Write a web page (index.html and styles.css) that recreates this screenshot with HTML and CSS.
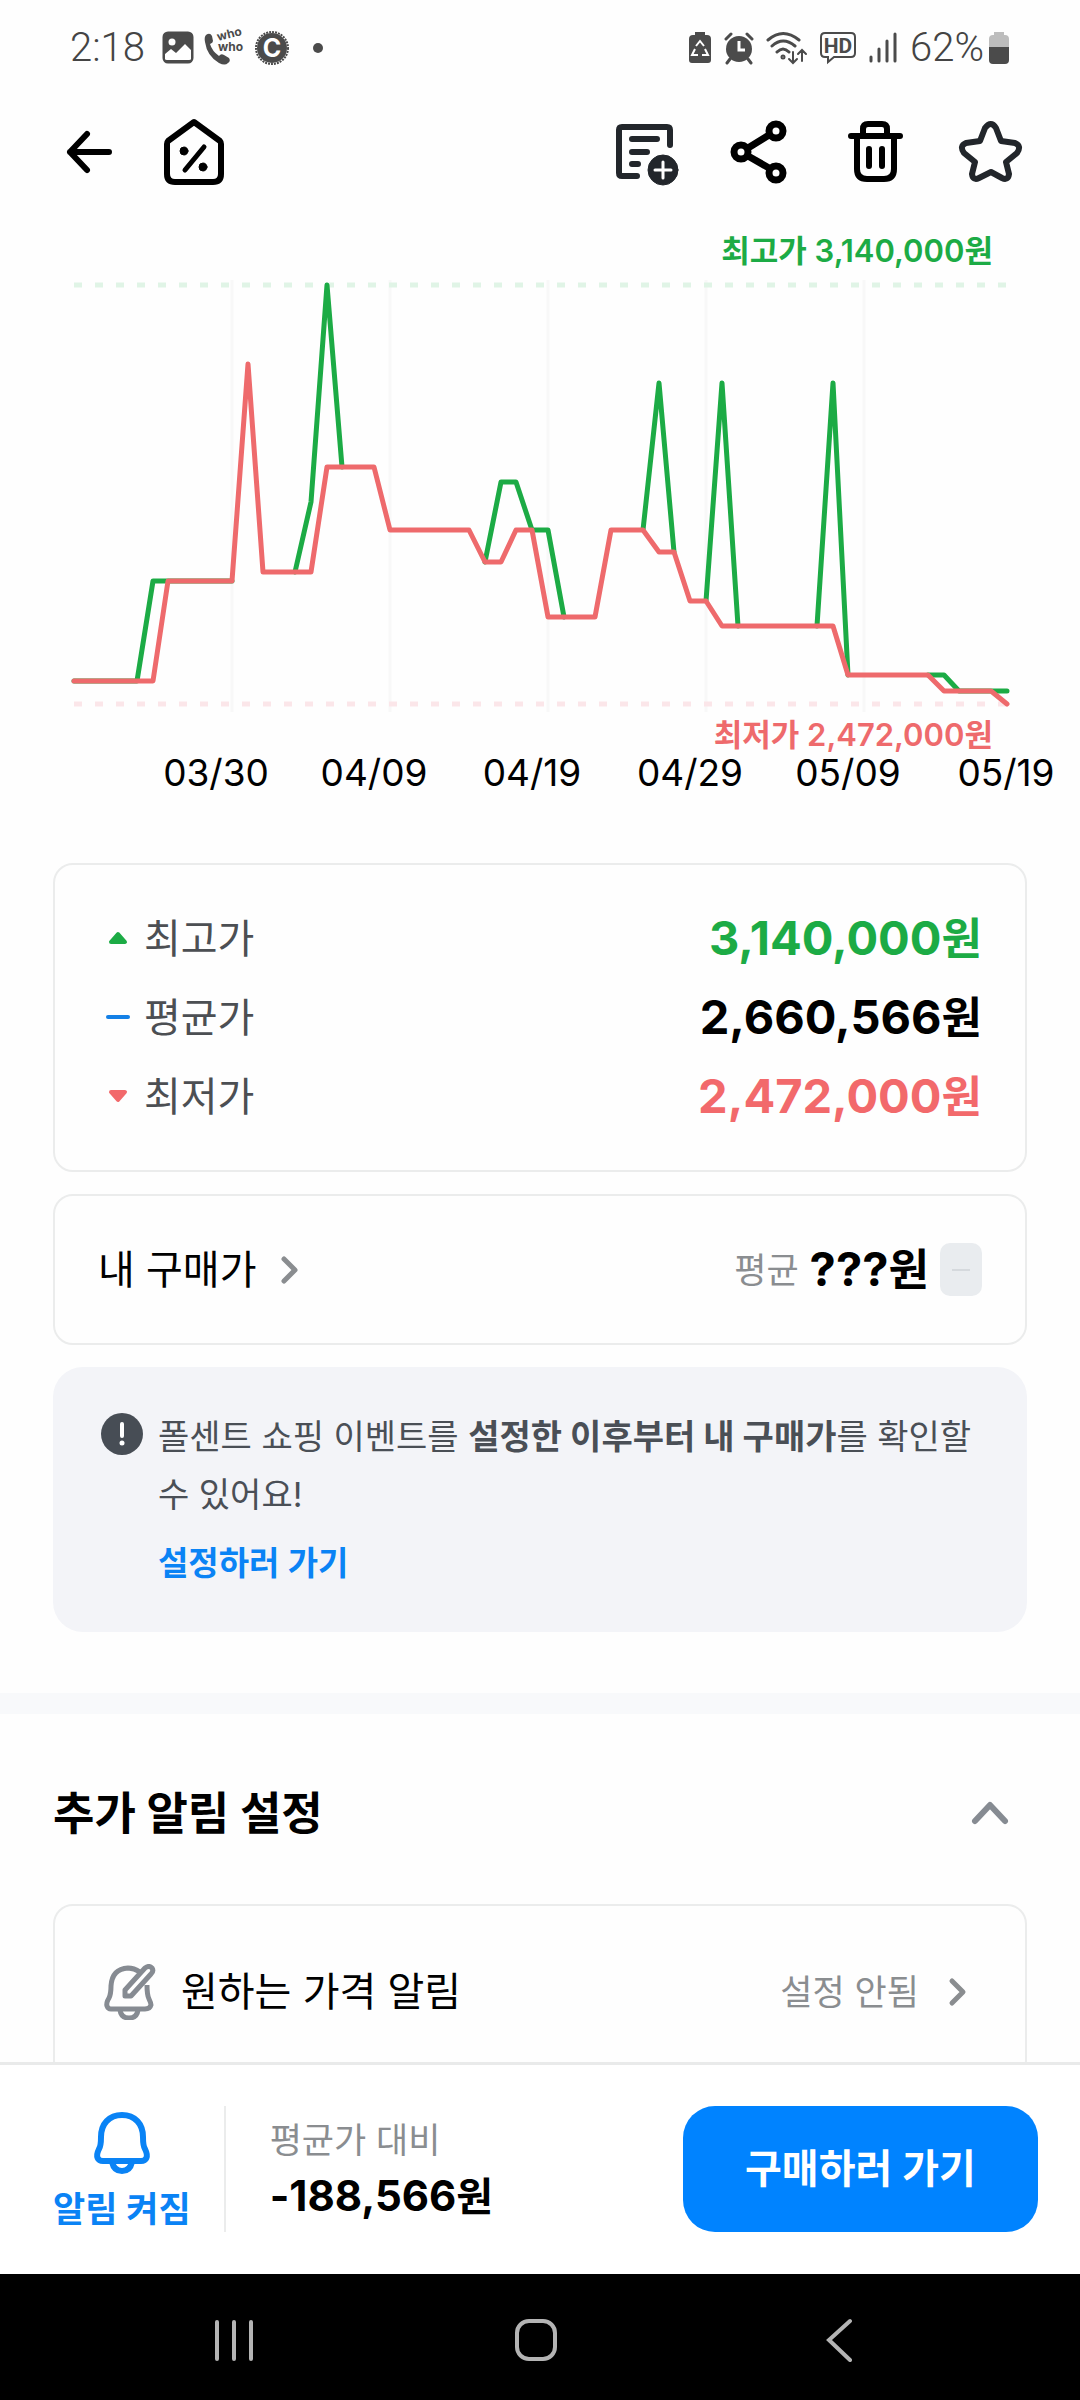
FILE: index.html
```html
<!DOCTYPE html>
<html lang="ko">
<head>
    <meta charset="UTF-8">
    <meta name="viewport" content="width=device-width, initial-scale=1.0">
    <title>가격 변동 그래프</title>
    <link rel="stylesheet" href="styles.css">
</head>
<body>
    <div class="app">
        <div class="status-bar">
            <div class="status-left">
                <span class="clock">2:18</span>
                <svg width="32" height="34" viewBox="0 0 32 34">
                    <rect x="2" y="2" width="28" height="29" rx="4" fill="#4b4b4b" stroke="#4b4b4b" stroke-width="3"/>
                    <circle cx="10" cy="11" r="3.5" fill="#fff"/>
                    <path d="M3 23l6-5 5 4 9-9 6 6v9q0 1-2 1H5q-2 0-2-1z" fill="#fff"/>
                </svg>
                <svg class="call" width="42" height="36" viewBox="0 0 42 36">
                    <path d="M3 5q4-3 6 1l1 5q0 2-3 3 2 7 9 12 2-3 5-1l5 3q2 3-1 5-3 3-9 0Q4 26 2 12 1 7 3 5z" fill="#4b4b4b"/>
                    <text x="15" y="11" class="who" transform="rotate(-14 15 11)">who</text>
                    <text x="15" y="21" class="who">who</text>
                </svg>
                <svg width="36" height="36" viewBox="0 0 36 36">
                    <circle cx="18" cy="18" r="15" fill="#4b4b4b"/>
                    <circle cx="18" cy="18" r="16" fill="none" stroke="#4b4b4b" stroke-width="2" stroke-dasharray="2 1"/>
                    <text x="18" y="27" class="badge-c">C</text>
                </svg>
                <span class="dot"></span>
            </div>
            <div class="status-right">
                <svg width="24" height="34" viewBox="0 0 24 34">
                    <path d="M7 1h10v3h2q4 0 4 4v21q0 3-3 3H4q-3 0-3-3V8q0-4 4-4h2z" fill="#4b4b4b"/>
                    <path d="M8 15l4-5 4 5M17 18l3 6h-6M10 24H4l3-6" fill="none" stroke="#fff" stroke-width="2"/>
                </svg>
                <svg width="30" height="34" viewBox="0 0 30 34">
                    <circle cx="15" cy="18" r="13" fill="#4b4b4b"/>
                    <path d="M2 8l5-5M28 8l-5-5M6 28l-3 4M24 28l3 4" stroke="#4b4b4b" stroke-width="3" stroke-linecap="round"/>
                    <path d="M15 10v9h6" fill="none" stroke="#fff" stroke-width="3"/>
                </svg>
                <svg width="42" height="34" viewBox="0 0 42 34" fill="none" stroke="#4b4b4b" stroke-width="3" stroke-linecap="round">
                    <path d="M2 9q15-13 31 0M6 15q11-10 23 0M11 21q6-6 12 0"/>
                    <circle cx="17" cy="26" r="1"/>
                    <path d="M27 21v10M23 28l4 4 4-4M36 30V20M32 23l4-4 4 4" stroke-width="2"/>
                </svg>
                <svg width="36" height="34" viewBox="0 0 36 34">
                    <path d="M5 2h26q4 0 4 4v16q0 4-4 4H14l-6 5v-5H5q-4 0-4-4V6q0-4 4-4z" fill="none" stroke="#4b4b4b" stroke-width="2"/>
                    <text x="18" y="22" class="hd">HD</text>
                </svg>
                <svg class="signal" width="30" height="34" viewBox="0 0 30 34" stroke="#4b4b4b" stroke-width="3" stroke-linecap="round">
                    <path d="M3 26v4M11 18v12M19 10v20M27 3v27"/>
                </svg>
                <span class="percent">62%</span>
                <svg width="22" height="34" viewBox="0 0 22 34">
                    <path d="M6 1h10v3h1q4 0 4 4v9H1V8q0-4 4-4h1z" fill="#bdbdbd"/>
                    <path d="M1 16h20v13q0 4-4 4H5q-4 0-4-4z" fill="#4b4b4b"/>
                </svg>
            </div>
        </div>

        <header class="header">
            <div class="header-left">
                <button type="button" class="icon-btn" aria-label="뒤로">
                    <svg viewBox="0 0 72 72" stroke-width="6"><path d="M56 36H17M34 18L17 36l17 18"/></svg>
                </button>
                <button type="button" class="icon-btn" aria-label="홈">
                    <svg viewBox="0 0 72 72" stroke-width="6">
                        <path d="M36 6L10 25q-1 1-1 3v30q0 8 8 8h38q8 0 8-8V28q0-2-1-3z"/>
                        <path d="M46 31L27 54" stroke-width="5"/>
                        <circle cx="26" cy="35" r="4" fill="#000" stroke-width="1"/>
                        <circle cx="45" cy="51" r="4" fill="#000" stroke-width="1"/>
                    </svg>
                </button>
            </div>
            <div class="header-right">
                <button type="button" class="icon-btn dark" aria-label="메모 추가">
                    <svg viewBox="0 0 72 72" stroke-width="6">
                        <path d="M60 29V14q0-3-3-3H12q-3 0-3 3v43q0 3 3 3h15"/>
                        <path d="M22 23h25M22 36h15M22 48h6"/>
                        <circle cx="53" cy="54" r="15" fill="#22262b" stroke-width="1"/>
                        <path d="M45 54h16M53 46v16" stroke="#fff" stroke-width="3"/>
                    </svg>
                </button>
                <button type="button" class="icon-btn" aria-label="공유">
                    <svg viewBox="0 0 72 72" stroke-width="7">
                        <circle cx="51" cy="15" r="7"/>
                        <circle cx="16" cy="36" r="7"/>
                        <circle cx="51" cy="57" r="7"/>
                        <path d="M23 32l21-13M23 40l21 12"/>
                    </svg>
                </button>
                <button type="button" class="icon-btn" aria-label="삭제">
                    <svg viewBox="0 0 72 72" stroke-width="6">
                        <path d="M11 20h49M23 18v-5q0-5 5-5h14q5 0 5 5v5M17 20v33q0 10 10 10h17q10 0 10-10V20M29 33v17M42 33v17"/>
                    </svg>
                </button>
                <button type="button" class="icon-btn dark" aria-label="즐겨찾기">
                    <svg viewBox="0 0 72 72" stroke-width="6">
                        <path d="M30 12Q36 4 41 12l5 13 14 2q7 3 2 10l-11 9 3 12q-1 7-7 4l-11-6-12 6q-6 3-7-4l3-12-11-9q-5-7 2-10l14-2z"/>
                    </svg>
                </button>
            </div>
        </header>

        <main class="content">
            <!-- Price history -->
            <svg class="chart" viewBox="0 0 1080 600" role="img" aria-label="가격 그래프">
                <path class="grid" d="M232 66v432M390 66v432M548 66v432M706 66v432M864 66v432"/>
                <path class="limit high" d="M74 71h934"/>
                <path class="limit low" d="M74 490h934"/>
                <polyline class="line high" points="74,467 137,467 153,367 232,367"/>
                <polyline class="line high" points="295,358 311,288 327,71 342,253"/>
                <polyline class="line high" points="485,348 501,268 516,268 532,316 548,316 564,403"/>
                <polyline class="line high" points="643,316 659,169 674,338"/>
                <polyline class="line high" points="706,387 722,169 738,412"/>
                <polyline class="line high" points="817,412 833,169 848,461"/>
                <polyline class="line high" points="928,461 944,461 959,477 1007,477"/>
                <polyline class="line low" points="74,467 153,467 168,367 232,367 248,150 263,358 311,358 327,253 374,253 390,316 469,316 485,348 501,348 516,316 532,316 548,403 595,403 611,316 643,316 659,338 674,338 690,387 706,387 722,412 833,412 848,461 928,461 944,477 991,477 1007,490"/>
                <text class="limit-label high" x="993" y="48">최고가 3,140,000원</text>
                <text class="limit-label low" x="993" y="532">최저가 2,472,000원</text>
                <g class="dates">
                    <text x="216" y="572">03/30</text>
                    <text x="374" y="572">04/09</text>
                    <text x="532" y="572">04/19</text>
                    <text x="690" y="572">04/29</text>
                    <text x="848" y="572">05/09</text>
                    <text x="1006" y="572">05/19</text>
                </g>
            </svg>

            <div class="cards">
                <dl class="card price-list">
                    <div class="price-row high">
                        <dt>
                            <svg width="40" height="40" viewBox="0 0 40 40"><path d="M20 15l7 8H13z" fill="#1cab45" stroke="#1cab45" stroke-width="4" stroke-linejoin="round"/></svg>
                            최고가
                        </dt>
                        <dd>3,140,000<span class="won">원</span></dd>
                    </div>
                    <div class="price-row">
                        <dt>
                            <svg width="40" height="40" viewBox="0 0 40 40"><path d="M10 19h20" stroke="#1480e6" stroke-width="4" stroke-linecap="round"/></svg>
                            평균가
                        </dt>
                        <dd>2,660,566<span class="won">원</span></dd>
                    </div>
                    <div class="price-row low">
                        <dt>
                            <svg width="40" height="40" viewBox="0 0 40 40"><path d="M20 23l7-8H13z" fill="#f2696b" stroke="#f2696b" stroke-width="4" stroke-linejoin="round"/></svg>
                            최저가
                        </dt>
                        <dd>2,472,000<span class="won">원</span></dd>
                    </div>
                </dl>

                <div class="card my-price">
                    <a href="#" class="my-price-link">
                        내 구매가
                        <svg class="chevron" width="20" height="30" viewBox="0 0 20 30"><path d="M4 4l11 11L4 26"/></svg>
                    </a>
                    <div class="my-price-value">
                        <span class="caption">평균</span>
                        <strong>???<span class="won">원</span></strong>
                        <span class="diff"></span>
                    </div>
                </div>

                <div class="notice">
                    <svg class="notice-icon" width="42" height="42" viewBox="0 0 42 42">
                        <circle cx="21" cy="21" r="21" fill="#474d55"/>
                        <path d="M21 11v12" stroke="#fff" stroke-width="4" stroke-linecap="round"/>
                        <circle cx="21" cy="30" r="2.5" fill="#fff"/>
                    </svg>
                    <div>
                        <p>폴센트 쇼핑 이벤트를 <b>설정한 이후부터 내 구매가</b>를 확인할 수 있어요!</p>
                        <a href="#">설정하러 가기</a>
                    </div>
                </div>
            </div>

            <section class="alerts">
                <div class="alerts-head">
                    <h2>추가 알림 설정</h2>
                    <button type="button" class="toggle" aria-label="접기">
                        <svg width="40" height="40" viewBox="0 0 40 40"><path d="M5 27l15-16 15 16"/></svg>
                    </button>
                </div>
                <div class="card alert-list">
                    <a href="#" class="alert-row">
                        <svg width="56" height="56" viewBox="0 0 56 56" fill="none" stroke="#868b92" stroke-width="5" stroke-linejoin="round">
                            <path d="M37 8Q31 4 25 4 9 5 8 22q0 8-2 12-3 5-2 8 1 3 4 3h34q5 0 6-4 0-2-2-6-2-4-2-14"/>
                            <path d="M17 46q1 8 9 8t9-8"/>
                            <path d="M22 32v-6L42 4q4-3 7 0 2 3-1 6L28 32z" fill="#fff"/>
                        </svg>
                        <span class="alert-name">원하는 가격 알림</span>
                        <span class="caption">설정 안됨</span>
                        <svg class="chevron" width="20" height="30" viewBox="0 0 20 30"><path d="M4 4l11 11L4 26"/></svg>
                    </a>
                </div>
            </section>
        </main>

        <footer class="buy-bar">
            <button type="button" class="alarm-btn">
                <svg width="62" height="62" viewBox="0 0 62 62" fill="none" stroke="#0a83f5" stroke-width="6" stroke-linejoin="round">
                    <path d="M31 3C18 3 10 12 10 25c0 6 0 9-2 12-4 8-1 12 4 12h38c5 0 8-4 4-12-2-3-2-6-2-12C52 12 44 3 31 3z"/>
                    <path d="M21 50q2 9 10 9t10-9"/>
                </svg>
                알림 켜짐
            </button>
            <div class="compare">
                <span class="caption">평균가 대비</span>
                <strong>-188,566<span class="won">원</span></strong>
            </div>
            <button type="button" class="buy-btn">구매하러 가기</button>
        </footer>

        <nav class="system-nav">
            <svg width="44" height="44" viewBox="0 0 44 44"><path d="M5 4v37M22 4v37M39 4v37"/></svg>
            <svg width="44" height="44" viewBox="0 0 44 44"><rect x="3" y="3" width="38" height="38" rx="12"/></svg>
            <svg width="44" height="44" viewBox="0 0 44 44"><path d="M33 3L12 22l21 20"/></svg>
        </nav>
    </div>
</body>
</html>
```
FILE: styles.css
```css
* {
    box-sizing: border-box;
}
body {
    margin: 0;
    background: #fefefe;
    color: #000;
    font-family: Inter, "Noto Sans CJK KR", sans-serif;
    line-height: 56px;
}
button {
    padding: 0;
    border: none;
    background: none;
    font-family: inherit;
    cursor: pointer;
}
a {
    color: inherit;
    text-decoration: none;
}
p, h2, dl, dd {
    margin: 0;
}
svg {
    display: block;
    flex-shrink: 0;
}
.app {
    display: flex;
    flex-direction: column;
    height: 100vh;
}

/* Status bar */
.status-bar {
    display: flex;
    justify-content: space-between;
    align-items: center;
    height: 96px;
    padding: 0 70px;
    color: #444;
    font-family: Roboto, sans-serif;
    font-size: 40px;
    font-weight: 300;
}
.status-left, .status-right {
    display: flex;
    align-items: center;
    gap: 9px;
}
.status-right {
    gap: 12px;
}
.clock {
    margin-right: 8px;
}
.percent {
    margin-right: -8px;
}
.call {
    overflow: visible;
}
.dot {
    width: 10px;
    height: 10px;
    margin-left: 14px;
    border-radius: 50%;
    background: #4b4b4b;
}
.who {
    font: 700 12px Inter, sans-serif;
    fill: #4b4b4b;
}
.badge-c {
    font: 700 25px Inter, sans-serif;
    fill: #fff;
    text-anchor: middle;
}
.hd {
    font: 700 21px Roboto, sans-serif;
    fill: #4b4b4b;
    text-anchor: middle;
}

/* Header */
.header {
    display: flex;
    justify-content: space-between;
    height: 118px;
    padding: 20px 53px 0;
}
.header-left {
    display: flex;
    gap: 33px;
}
.header-right {
    display: flex;
    gap: 43px;
}
.icon-btn {
    width: 72px;
    height: 72px;
}
.icon-btn svg {
    fill: none;
    stroke: #000;
    stroke-linecap: round;
    stroke-linejoin: round;
}
.icon-btn.dark svg {
    stroke: #22262b;
}

.content {
    flex: 1;
    min-height: 0;
    overflow-y: auto;
    scrollbar-width: none;
}

/* Chart */
.chart {
    width: 100%;
}
.grid {
    stroke: #f8f8f8;
    stroke-width: 3;
}
.limit {
    stroke-width: 5;
    stroke-dasharray: 8 13;
}
.limit.high {
    stroke: #e0f4e6;
}
.limit.low {
    stroke: #fbe6e9;
}
.line {
    fill: none;
    stroke-width: 5;
    stroke-linecap: round;
    stroke-linejoin: round;
}
.line.high {
    stroke: #1cab45;
}
.line.low {
    stroke: #ee6a6c;
}
.limit-label {
    font-size: 31px;
    font-weight: 600;
    text-anchor: end;
}
.limit-label.high {
    fill: #1cab45;
}
.limit-label.low {
    fill: #ee6a6c;
}
.dates {
    font-size: 37px;
    text-anchor: middle;
}

/* Cards */
.cards {
    display: flex;
    flex-direction: column;
    gap: 22px;
    padding: 49px 53px 61px;
}
.card {
    border: 2px solid #ebecec;
    border-radius: 20px;
}
.price-list {
    padding: 34px 43px;
}
.price-row {
    display: flex;
    justify-content: space-between;
    align-items: center;
    height: 79px;
}
.price-row dt {
    display: flex;
    align-items: center;
    gap: 6px;
    color: #4c4f53;
    font-size: 40px;
}
.price-row dd, .my-price strong {
    font-size: 47px;
    font-weight: 700;
}
.won {
    font-size: 44px;
}
.price-row.high dd {
    color: #1cab45;
}
.price-row.low dd {
    color: #f2696b;
}
.my-price {
    display: flex;
    justify-content: space-between;
    align-items: center;
    height: 151px;
    padding: 0 43px;
}
.my-price-link {
    display: flex;
    align-items: center;
    gap: 24px;
    font-size: 40px;
}
.chevron {
    fill: none;
    stroke: #8a8d90;
    stroke-width: 5;
    stroke-linecap: round;
    stroke-linejoin: round;
}
.caption {
    color: #8a8d90;
    font-size: 35px;
}
.my-price-value {
    display: flex;
    align-items: center;
    gap: 11px;
}
.diff {
    display: flex;
    align-items: center;
    justify-content: center;
    width: 42px;
    height: 53px;
    border-radius: 10px;
    background: #e9ecef;
}
.diff::before {
    content: "";
    width: 18px;
    height: 2px;
    background: #d5d9dd;
}
.notice {
    display: flex;
    gap: 15px;
    padding: 41px 40px 40px 48px;
    border-radius: 30px;
    background: #f3f4f8;
    color: #4a4f56;
    font-size: 34px;
    line-height: 58px;
    word-break: keep-all;
}
.notice-icon {
    margin-top: 5px;
}
.notice a {
    display: inline-block;
    margin-top: 10px;
    color: #0a83f5;
    font-size: 33px;
    font-weight: 600;
}

/* Extra alerts */
.alerts {
    padding: 72px 53px 0;
    border-top: 21px solid #f8f9fb;
}
.alerts-head {
    display: flex;
    justify-content: space-between;
    align-items: center;
    margin-bottom: 62px;
    padding-right: 17px;
}
.alerts h2 {
    font-size: 45px;
}
.toggle svg {
    fill: none;
    stroke: #868b92;
    stroke-width: 6;
    stroke-linecap: round;
    stroke-linejoin: round;
}
.alert-row {
    display: flex;
    align-items: center;
    height: 172px;
    padding: 0 57px 0 48px;
}
.alert-name {
    flex: 1;
    margin-left: 22px;
    font-size: 40px;
}
.alert-row .chevron {
    margin-left: 29px;
}

/* Bottom bar */
.buy-bar {
    display: flex;
    align-items: center;
    height: 212px;
    padding: 0 42px 2px 53px;
    border-top: 3px solid #e9eaea;
    background: #fff;
}
.alarm-btn {
    display: flex;
    flex-direction: column;
    align-items: center;
    gap: 12px;
    padding-top: 6px;
    color: #0a83f5;
    font-size: 35px;
    font-weight: 600;
    line-height: 46px;
}
.compare {
    display: flex;
    flex-direction: column;
    justify-content: center;
    height: 126px;
    margin-left: 33px;
    padding-left: 44px;
    border-left: 2px solid #ebecec;
}
.compare strong {
    font-size: 42px;
}
.compare .won {
    font-size: 40px;
}
.buy-btn {
    width: 355px;
    height: 126px;
    margin-left: auto;
    border-radius: 32px;
    background: #0083ff;
    color: #fff;
    font-size: 40px;
    font-weight: 600;
    line-height: 56px;
}

.system-nav {
    display: grid;
    grid-template-columns: repeat(3, 1fr);
    align-items: center;
    justify-items: center;
    height: 126px;
    padding: 6px 90px 0 83px;
    background: #000;
}
.system-nav svg {
    fill: none;
    stroke: #b4b4b4;
    stroke-width: 4;
    stroke-linecap: round;
}
```
